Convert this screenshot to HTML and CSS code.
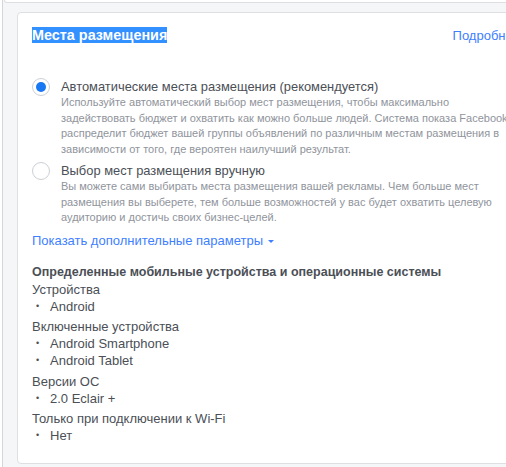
FILE: index.html
```html
<!DOCTYPE html>
<html lang="ru">
<head>
    <meta charset="UTF-8">
    <title>Места размещения</title>
    <link rel="stylesheet" href="styles.css">
</head>
<body>
    <div class="page">
        <div class="prev-card"></div>

        <div class="card">
            <div class="card-header">
                <h2><span class="selected">Места размещения</span></h2>
                <a href="#" class="link">Подробнее</a>
            </div>

            <div class="options">
                <label class="option">
                    <span class="radio checked"></span>
                    <span class="option-body">
                        <span class="option-title">Автоматические места размещения (рекомендуется)</span>
                        <span class="option-desc">Используйте автоматический выбор мест размещения, чтобы максимально задействовать бюджет и охватить как можно больше людей. Система показа Facebook распределит бюджет вашей группы объявлений по различным местам размещения в зависимости от того, где вероятен наилучший результат.</span>
                    </span>
                </label>
                <label class="option">
                    <span class="radio"></span>
                    <span class="option-body">
                        <span class="option-title">Выбор мест размещения вручную</span>
                        <span class="option-desc">Вы можете сами выбирать места размещения вашей рекламы. Чем больше мест размещения вы выберете, тем больше возможностей у вас будет охватить целевую аудиторию и достичь своих бизнес-целей.</span>
                    </span>
                </label>
            </div>

            <a href="#" class="link more">Показать дополнительные параметры <span class="caret"></span></a>

            <div class="specs">
                <h3>Определенные мобильные устройства и операционные системы</h3>
                <div class="spec-group">
                    <div class="spec-label">Устройства</div>
                    <ul>
                        <li>Android</li>
                    </ul>
                </div>
                <div class="spec-group">
                    <div class="spec-label">Включенные устройства</div>
                    <ul>
                        <li>Android Smartphone</li>
                        <li>Android Tablet</li>
                    </ul>
                </div>
                <div class="spec-group">
                    <div class="spec-label">Версии ОС</div>
                    <ul>
                        <li>2.0 Eclair +</li>
                    </ul>
                </div>
                <div class="spec-group">
                    <div class="spec-label">Только при подключении к Wi-Fi</div>
                    <ul>
                        <li>Нет</li>
                    </ul>
                </div>
            </div>
        </div>
    </div>
</body>
</html>
```

FILE: styles.css
```css
:root {
    --bg: #f5f6f7;
    --border: #dddfe2;
    --text: #4b4f56;
    --muted: #90949c;
    --link: #4080ff;
    --radio: #1877f2;
}

* {
    margin: 0;
    padding: 0;
    box-sizing: border-box;
}

body {
    font-family: "Liberation Sans", Arial, sans-serif;
    background: #fff;
    color: var(--text);
    overflow: hidden;
    height: 467px;
}

.page {
    margin-left: 2px;
    border-left: 1px solid #d3d6db;
    background: var(--bg);
    height: 467px;
    padding-left: 1px;
}

.prev-card {
    height: 3px;
    background: #fff;
    border: 1px solid var(--border);
    border-top: none;
    border-radius: 0 0 4px 4px;
    width: 560px;
}

.card {
    margin: 9px 0 0 13px;
    width: 518px;
    background: #fff;
    border: 1px solid var(--border);
    border-radius: 4px;
    padding: 14px 14px 19px 14px;
}

.card-header {
    display: flex;
    justify-content: space-between;
    align-items: center;
}

h2 {
    font-size: 14.4px;
    font-weight: bold;
    line-height: 17px;
}

.selected {
    background: #3390ff;
    color: #fff;
}

.link {
    color: var(--link);
    text-decoration: none;
    font-size: 13px;
}

.options {
    margin-top: 35px;
    display: flex;
    flex-direction: column;
    gap: 6px;
}

.option {
    display: flex;
    gap: 11px;
    cursor: pointer;
}

.radio {
    flex: none;
    width: 18px;
    height: 18px;
    border: 1px solid #ccd0d5;
    border-radius: 50%;
    display: flex;
    align-items: center;
    justify-content: center;
    margin-top: -1px;
}

.radio.checked::after {
    content: "";
    width: 10px;
    height: 10px;
    border-radius: 50%;
    background: var(--radio);
}

.option-body {
    display: flex;
    flex-direction: column;
    width: 458px;
}

.option-title {
    font-size: 12.9px;
    line-height: 16px;
    color: var(--text);
}

.option-desc {
    font-size: 11px;
    line-height: 15.5px;
    color: var(--muted);
}

.more {
    display: inline-block;
    margin-top: 7px;
    line-height: 16px;
}

.caret {
    display: inline-block;
    vertical-align: middle;
    margin-left: 1px;
    border-left: 3px solid transparent;
    border-right: 3px solid transparent;
    border-top: 3px solid var(--link);
}

.specs {
    margin-top: 15px;
    font-size: 13px;
    line-height: 17px;
}

.specs h3 {
    font-size: 12.5px;
    font-weight: bold;
    line-height: 17px;
}

.spec-group + .spec-group {
    margin-top: 3.5px;
}

.specs ul {
    list-style: none;
}

.specs li::before {
    content: "•";
    display: inline-block;
    width: 14px;
    margin-left: 4px;
    font-size: 9px;
    vertical-align: top;
}
```
